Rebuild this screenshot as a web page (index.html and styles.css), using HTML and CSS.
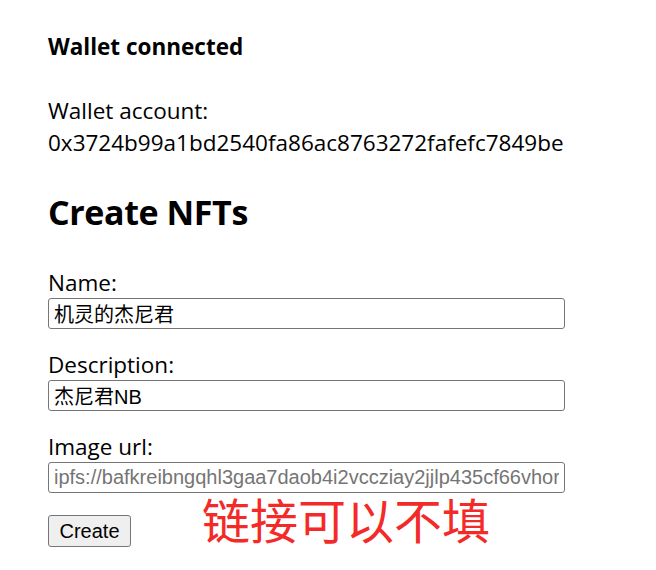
FILE: index.html
```html
<!DOCTYPE html>
<html lang="zh-CN">
<head>
<meta charset="utf-8">
<title>Create NFTs</title>
<link rel="stylesheet" href="styles.css">
</head>
<body>
<main class="page">
  <p class="status">Wallet connected</p>
  <p class="account">Wallet account:<br>0x3724b99a1bd2540fa86ac8763272fafefc7849be</p>
  <h2 class="title">Create NFTs</h2>
  <form class="form">
    <label class="field">
      <span class="label">Name:</span>
      <input class="input" type="text" value="机灵的杰尼君">
    </label>
    <label class="field">
      <span class="label">Description:</span>
      <input class="input" type="text" value="杰尼君NB">
    </label>
    <label class="field field-last">
      <span class="label">Image url:</span>
      <input class="input" type="text" placeholder="ipfs://bafkreibngqhl3gaa7daob4i2vccziay2jjlp435cf66vhor">
    </label>
    <div class="actions">
      <button class="button" type="button">Create</button>
      <span class="note">链接可以不填</span>
    </div>
  </form>
</main>
</body>
</html>
```
FILE: styles.css
```css
html, body {
  margin: 0;
  padding: 0;
  background: #ffffff;
}

body {
  font-family: "Open Sans", "Noto Sans", "Noto Sans CJK SC", sans-serif;
  font-size: 22.5px;
  line-height: 32px;
  color: #000000;
}

.page {
  padding: 31px 0 0 48px;
}

.status {
  margin: 0;
  font-weight: 700;
}

.account {
  margin: 32px 0 0 0;
}

.title {
  margin: 29px 0 0 0;
  font-size: 34px;
  line-height: 48px;
  font-weight: 700;
  letter-spacing: -0.4px;
}

.form {
  display: flex;
  flex-direction: column;
  margin-top: 31px;
}

.field {
  display: flex;
  flex-direction: column;
  margin-bottom: 20px;
}

.field-last {
  margin-bottom: 0;
}

.label {
  line-height: 31px;
}

.input {
  box-sizing: border-box;
  width: 517px;
  height: 31px;
  margin: 0;
  padding: 0 5px;
  border: 1px solid #767676;
  border-radius: 3px;
  font-family: "Liberation Sans", Arial, "Noto Sans CJK SC", sans-serif;
  font-size: 20px;
  color: #000000;
  background: #ffffff;
}

.input::placeholder {
  color: #757575;
}

.actions {
  display: flex;
  align-items: flex-start;
}

.button {
  box-sizing: border-box;
  width: 83px;
  height: 32px;
  margin: 22px 0 0 0;
  padding: 0;
  border: 1px solid #767676;
  border-radius: 3px;
  background: #efefef;
  font-family: "Liberation Sans", Arial, sans-serif;
  font-size: 20px;
  color: #000000;
}

.note {
  margin: -1px 0 0 71px;
  font-family: "Noto Sans CJK SC", sans-serif;
  font-size: 48px;
  line-height: 52px;
  color: #f42a28;
}
```
